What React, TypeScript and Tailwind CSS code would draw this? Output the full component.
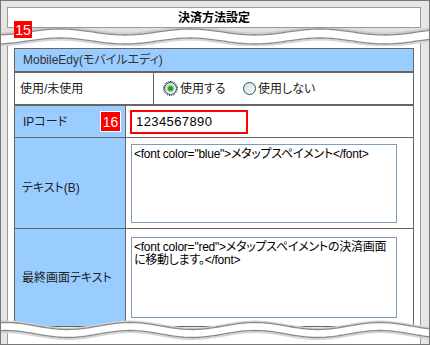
import React from 'react';

// torn-edge wave path: crest (top) at x = crest
const wavePath = (y0: number, amp: number, period: number, crest: number) => {
  const pts: string[] = [];
  for (let x = -2; x <= 434; x += 2) {
    const y = y0 - amp * Math.cos((2 * Math.PI * (x - crest)) / period);
    pts.push(`${x},${y.toFixed(2)}`);
  }
  return pts;
};

const TopTear = () => {
  const up = wavePath(4, 3, 130, 60);
  const low = wavePath(13, 3, 130, 60);
  return (
    <svg className="absolute left-[-1px] top-[27px]" width={430} height={18}>
      <path d={`M-2,0 L434,0 L${up.slice().reverse().join(' L')} Z`} fill="#e2e2e2" />
      <path d={`M${up.join(' L')} L${low.slice().reverse().join(' L')} Z`} fill="#ffffff" />
      <path d={`M${up.join(' L')}`} transform="translate(0,-1.5)" fill="none" stroke="#cdcdcd" strokeWidth={2} />
      <path d={`M${up.join(' L')}`} fill="none" stroke="#8a8a8a" strokeWidth={1.3} />
      <path d={`M${low.join(' L')}`} transform="translate(0,1.6)" fill="none" stroke="#d6d6d6" strokeWidth={2} />
      <path d={`M${low.join(' L')}`} fill="none" stroke="#8a8a8a" strokeWidth={1.3} />
    </svg>
  );
};

const BottomTear = () => {
  const up = wavePath(14, 3.5, 125, 5);
  const low = wavePath(22, 3.5, 125, 5);
  return (
    <svg className="absolute left-[-1px] top-[311px]" width={430} height={34}>
      <defs>
        <clipPath id="below-tear">
          <path d={`M${low.join(' L')} L434,40 L-2,40 Z`} />
        </clipPath>
      </defs>
      <path d={`M${up.join(' L')} L${low.slice().reverse().join(' L')} Z`} fill="#ffffff" />
      <g clipPath="url(#below-tear)">
        <rect x={0} y={0} width={430} height={34} fill="#e6e6e6" />
        <rect x={7.5} y={-1} width={413} height={40} fill="#ffffff" stroke="#9a9a9a" strokeWidth={1} />
        <rect x={0} y={0} width={1} height={34} fill="#777777" />
        <rect x={429} y={0} width={1} height={34} fill="#777777" />
      </g>
      <rect x={0} y={33} width={430} height={1} fill="#777777" />
      <path d={`M${up.join(' L')}`} transform="translate(0,-1.2)" fill="none" stroke="#d4d4d4" strokeWidth={1.5} />
      <path d={`M${up.join(' L')}`} fill="none" stroke="#8a8a8a" strokeWidth={1.3} />
      <path d={`M${low.join(' L')}`} transform="translate(0,1.6)" fill="none" stroke="#d6d6d6" strokeWidth={2} />
      <path d={`M${low.join(' L')}`} fill="none" stroke="#8a8a8a" strokeWidth={1.3} />
    </svg>
  );
};

const Radio = ({ checked, focus }: { checked?: boolean; focus?: boolean }) => (
  <span
    className={
      focus
        ? 'w-[13px] h-[13px] rounded-full border border-[#1c5180] bg-gradient-to-br from-[#d6d6d0] to-white flex items-center justify-center outline-1 outline-dotted outline-[#222]'
        : 'w-[13px] h-[13px] rounded-full border border-[#1c5180] bg-gradient-to-br from-[#d6d6d0] to-white flex items-center justify-center'
    }
  >
    {checked && <span className="w-[5px] h-[5px] rounded-full bg-[#21a121] shadow-[0_0_1px_1px_#7fd67f]" />}
  </span>
);

export default function App() {
  return (
    <div className="relative w-[430px] h-[345px] overflow-hidden border border-[#777] bg-[#e6e6e6] pt-[6px] pl-[6px] font-['Liberation_Sans','Noto_Sans_CJK_JP',sans-serif] [font-feature-settings:'palt'] text-[12px] text-[#222]">
      <div className="w-[414px] h-[400px] border border-[#9a9a9a] bg-white">
        {/* title */}
        <div className="h-[20px] border-b border-[#9a9a9a] flex items-center justify-center font-bold text-[12px] text-black">
          決済方法設定
        </div>

        {/* settings table */}
        <div className="mt-[20px] ml-[6px] w-[400px] border border-[#666]">
          <div className="h-[24px] bg-[#99ccff] border-b-2 border-[#666] flex items-center pl-[8px] text-[#333]">
            MobileEdy(モバイルエディ)
          </div>

          <div className="h-[33px] border-b-2 border-[#666] flex">
            <div className="w-[139px] border-r border-[#666] flex items-center pl-[5px]">使用/未使用</div>
            <div className="flex items-center pl-[10px]">
              <div className="w-[79px] flex items-center gap-[3px]">
                <Radio checked focus />
                <span>使用する</span>
              </div>
              <div className="flex items-center gap-[2px]">
                <Radio />
                <span>使用しない</span>
              </div>
            </div>
          </div>

          <div className="h-[32px] border-b border-[#666] flex">
            <div className="w-[111px] bg-[#99ccff] border-r border-[#666] flex items-center justify-between pl-[8px] pr-[4px]">
              <span>IPコード</span>
              <span className="w-[21px] h-[21px] bg-[#ff0000] border border-white flex items-center justify-center text-white text-[14px] leading-none">
                16
              </span>
            </div>
            <div className="flex items-center pl-[4px]">
              <div className="w-[118px] h-[24px] border-2 border-[#ff0000] flex items-center pl-[4px] text-[13px] tracking-[0.4px] text-black">
                1234567890
              </div>
            </div>
          </div>

          <div className="h-[91px] border-b border-[#666] flex">
            <div className="w-[111px] bg-[#99ccff] border-r border-[#666] flex items-center pl-[7px] pt-[10px]">
              テキスト(B)
            </div>
            <div className="pl-[5px] pt-[6px]">
              <div className="w-[266px] h-[79px] overflow-hidden whitespace-nowrap border border-[#7f9db9] bg-white px-[2px] pt-[3px] leading-[13px] tracking-[-0.25px] text-black">
                {'<font color="blue">メタップスペイメント</font>'}
              </div>
            </div>
          </div>

          <div className="h-[97px] flex">
            <div className="w-[111px] bg-[#99ccff] border-r border-[#666] flex items-center pl-[7px]">
              最終画面テキスト
            </div>
            <div className="pl-[5px] pt-[8px]">
              <div className="w-[266px] h-[81px] overflow-hidden whitespace-nowrap border border-[#7f9db9] bg-white px-[2px] pt-[3px] leading-[13px] tracking-[-0.25px] text-black">
                {'<font color="red">メタップスペイメントの決済画面'}
                <br />
                {'に移動します。</font>'}
              </div>
            </div>
          </div>
        </div>
      </div>

      <TopTear />
      <BottomTear />

      <span className="absolute left-[13px] top-[20px] w-[18px] h-[17px] bg-[#ff0000] flex items-center justify-center text-white text-[14px] leading-none">
        15
      </span>
    </div>
  );
}
